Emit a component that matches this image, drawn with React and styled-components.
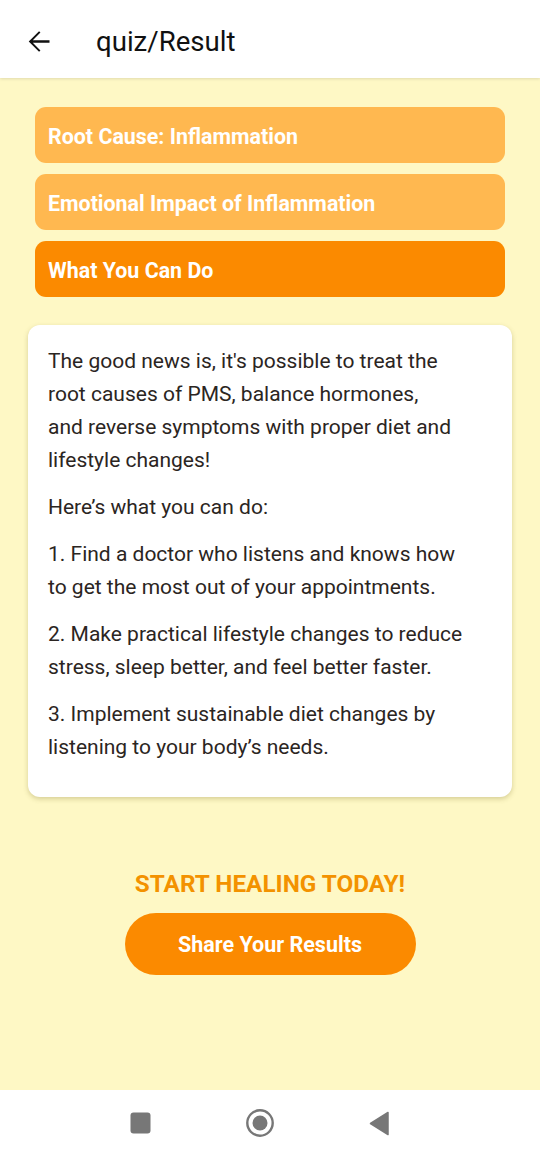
import React, { useState } from "react";
import styled, { createGlobalStyle } from "styled-components";

const GlobalStyle = createGlobalStyle`
  html, body {
    margin: 0;
    padding: 0;
    background: #fef8c5;
    font-family: Roboto, "Noto Sans", Arial, sans-serif;
  }
  * { box-sizing: border-box; }
`;

const Screen = styled.div`
  width: 540px;
  height: 1156px;
  display: flex;
  flex-direction: column;
  background: #fef8c5;
`;

const Header = styled.header`
  height: 78px;
  background: #fff;
  display: flex;
  align-items: center;
  padding: 4px 0 0 21px;
  box-shadow: 0 1px 3px rgba(0, 0, 0, 0.12);
  position: relative;
  z-index: 1;
`;

const BackButton = styled.button`
  border: 0;
  background: none;
  padding: 0;
  width: 34px;
  height: 34px;
  display: flex;
  align-items: center;
  justify-content: center;
  margin-right: 41px;
`;

const Title = styled.h1`
  margin: 0;
  font-size: 27.6px;
  font-weight: 400;
  color: #111;
`;

const Content = styled.main`
  flex: 1;
  display: flex;
  flex-direction: column;
  padding: 29px 28px 0;
`;

const Tabs = styled.div`
  display: flex;
  flex-direction: column;
  gap: 11px;
  padding: 0 7px;
`;

const Tab = styled.button`
  height: 56px;
  border: 0;
  border-radius: 11px;
  background: ${(p) => (p.$active ? "#fb8a00" : "#ffb850")};
  color: #fff;
  font-family: inherit;
  font-size: 21.4px;
  font-weight: 700;
  text-align: left;
  padding: 3px 13px 0;
  cursor: pointer;
`;

const Card = styled.section`
  margin-top: 28px;
  background: #fff;
  border-radius: 12px;
  padding: 20px 20px 19px;
  box-shadow: 0 2px 5px rgba(120, 110, 40, 0.3);
`;

const Para = styled.p`
  margin: 0 0 14px;
  font-size: 21px;
  line-height: 33px;
  color: #2b2522;
`;

const Cta = styled.div`
  margin-top: 74px;
  display: flex;
  flex-direction: column;
  align-items: center;
`;

const CtaText = styled.div`
  font-size: 24.3px;
  font-weight: 700;
  color: #f39200;
  line-height: 26px;
`;

const ShareButton = styled.button`
  margin-top: 16px;
  width: 291px;
  height: 62px;
  border: 0;
  border-radius: 31px;
  background: #fb8a00;
  color: #fff;
  font-family: inherit;
  font-size: 21.5px;
  font-weight: 700;
  cursor: pointer;
`;

const NavBar = styled.nav`
  height: 66px;
  background: #fff;
  display: flex;
  align-items: center;
  justify-content: center;
  gap: 91px;
  padding-right: 21px;
`;

const NavIcon = styled.div`
  width: 28px;
  height: 28px;
  display: flex;
  align-items: center;
  justify-content: center;
`;

const tabs = [
  "Root Cause: Inflammation",
  "Emotional Impact of Inflammation",
  "What You Can Do",
];

export default function App() {
  const [active, setActive] = useState(2);

  return (
    <Screen>
      <GlobalStyle />
      <Header>
        <BackButton aria-label="Back">
          <svg width="33" height="33" viewBox="0 0 24 24">
            <path d="M20 11.1H7.83l5.59-5.59L12.4 4.5 4.9 12l7.5 7.5 1.02-1.02L7.83 12.9H20z" fill="#111" />
          </svg>
        </BackButton>
        <Title>quiz/Result</Title>
      </Header>

      <Content>
        <Tabs>
          {tabs.map((t, i) => (
            <Tab key={t} $active={i === active} onClick={() => setActive(i)}>
              {t}
            </Tab>
          ))}
        </Tabs>

        <Card>
          <Para>
            The good news is, it's possible to treat the<br />
            root causes of PMS, balance hormones,<br />
            and reverse symptoms with proper diet and<br />
            lifestyle changes!
          </Para>
          <Para>Here’s what you can do:</Para>
          <Para>
            1. Find a doctor who listens and knows how<br />
            to get the most out of your appointments.
          </Para>
          <Para>
            2. Make practical lifestyle changes to reduce<br />
            stress, sleep better, and feel better faster.
          </Para>
          <Para>
            3. Implement sustainable diet changes by<br />
            listening to your body’s needs.
          </Para>
        </Card>

        <Cta>
          <CtaText>START HEALING TODAY!</CtaText>
          <ShareButton>Share Your Results</ShareButton>
        </Cta>
      </Content>

      <NavBar>
        <NavIcon>
          <svg width="21" height="22" viewBox="0 0 21 22">
            <rect x="0.5" y="0.5" width="20" height="21" rx="3" fill="#777" />
          </svg>
        </NavIcon>
        <NavIcon>
          <svg width="28" height="28" viewBox="0 0 28 28">
            <circle cx="14" cy="14" r="12.7" fill="none" stroke="#777" strokeWidth="2.4" />
            <circle cx="14" cy="14" r="7.5" fill="#777" />
          </svg>
        </NavIcon>
        <NavIcon>
          <svg width="20" height="25" viewBox="0 0 20 25">
            <path d="M19 1.5 L1.5 12.5 L19 23.5 Z" fill="#777" strokeLinejoin="round" stroke="#777" strokeWidth="1.5" />
          </svg>
        </NavIcon>
      </NavBar>
    </Screen>
  );
}
